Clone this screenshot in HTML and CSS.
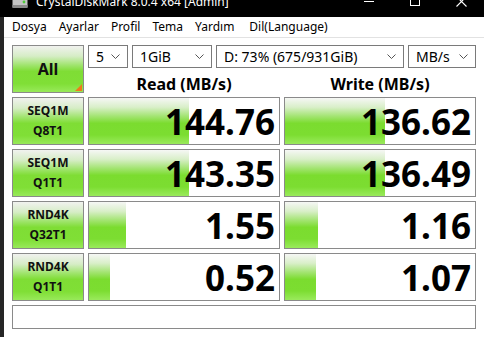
FILE: index.html
```html
<!DOCTYPE html>
<html lang="tr">
<head>
    <meta charset="UTF-8">
    <title>CrystalDiskMark 8.0.4 x64 [Admin]</title>
    <link rel="stylesheet" href="styles.css">
</head>
<body>
    <div class="titlebar">
        <div class="titlebar-row">
            <svg class="app-icon" viewBox="0 0 16 16">
                <rect x="0.5" y="4" width="15" height="11" rx="1.5" fill="#c4c4c4"/>
                <rect x="0.5" y="12" width="15" height="3" fill="#8a8a8a"/>
                <circle cx="12" cy="9" r="1.4" fill="#4ecb3a"/>
            </svg>
            <div class="title">CrystalDiskMark 8.0.4 x64 [Admin]</div>
            <div class="win-btn">
                <svg width="10" height="10" viewBox="0 0 10 10"><path d="M0 5.5h10" stroke="#fff" stroke-width="1"/></svg>
            </div>
            <div class="win-btn">
                <svg width="10" height="10" viewBox="0 0 10 10"><rect x="0.5" y="0.5" width="9" height="9" fill="none" stroke="#fff" stroke-width="1"/></svg>
            </div>
            <div class="win-btn">
                <svg width="11" height="11" viewBox="0 0 11 11"><path d="M0.5 0.5l10 10M10.5 0.5l-10 10" stroke="#fff" stroke-width="1.1"/></svg>
            </div>
        </div>
    </div>

    <div class="window">
        <div class="edge"></div>
        <div class="client">
            <div class="menu">
                <span>Dosya</span>
                <span>Ayarlar</span>
                <span>Profil</span>
                <span>Tema</span>
                <span>Yardım</span>
                <span class="menu-lang">Dil(Language)</span>
            </div>

            <div class="main">
                <div class="all-btn">All</div>
                <div class="controls">
                    <div class="selects">
                        <div class="select sel-count"><span>5</span><svg class="chev" viewBox="0 0 9 5"><polyline points="0.5,0.5 4.5,4.5 8.5,0.5"/></svg></div>
                        <div class="select sel-size"><span>1GiB</span><svg class="chev" viewBox="0 0 9 5"><polyline points="0.5,0.5 4.5,4.5 8.5,0.5"/></svg></div>
                        <div class="select sel-drive"><span>D: 73% (675/931GiB)</span><svg class="chev" viewBox="0 0 9 5"><polyline points="0.5,0.5 4.5,4.5 8.5,0.5"/></svg></div>
                        <div class="select sel-unit"><span>MB/s</span><svg class="chev" viewBox="0 0 9 5"><polyline points="0.5,0.5 4.5,4.5 8.5,0.5"/></svg></div>
                    </div>
                    <div class="heads">
                        <div class="head">Read (MB/s)</div>
                        <div class="head">Write (MB/s)</div>
                    </div>
                </div>

                <div class="label"><span>SEQ1M</span><span>Q8T1</span></div>
                <div class="cell" style="--fill: 100px">144.76</div>
                <div class="cell" style="--fill: 100px">136.62</div>

                <div class="label"><span>SEQ1M</span><span>Q1T1</span></div>
                <div class="cell" style="--fill: 100px">143.35</div>
                <div class="cell" style="--fill: 100px">136.49</div>

                <div class="label"><span>RND4K</span><span>Q32T1</span></div>
                <div class="cell" style="--fill: 37px">1.55</div>
                <div class="cell" style="--fill: 33px">1.16</div>

                <div class="label"><span>RND4K</span><span>Q1T1</span></div>
                <div class="cell" style="--fill: 21px">0.52</div>
                <div class="cell" style="--fill: 31px">1.07</div>

                <div class="status"></div>
            </div>
        </div>
    </div>
</body>
</html>
```

FILE: styles.css
```css
* {
    margin: 0;
    padding: 0;
    box-sizing: border-box;
}
body {
    width: 484px;
    height: 337px;
    overflow: hidden;
    background: #fff;
    color: #000;
    font-family: 'Noto Sans', 'Open Sans', sans-serif;
}

/* window chrome */
.titlebar {
    height: 17px;
    overflow: hidden;
    background: #000;
    color: #fff;
}
.titlebar-row {
    height: 32px;
    margin-top: -15px;
    display: flex;
    align-items: center;
}
.app-icon {
    width: 16px;
    height: 16px;
    margin-left: 12px;
}
.title {
    flex: 1;
    margin-left: 8px;
    font-size: 12px;
}
.win-btn {
    width: 46px;
    height: 32px;
    display: flex;
    align-items: center;
    justify-content: center;
}
.window {
    display: flex;
    height: 320px;
}
.edge {
    width: 4px;
    background: #262626;
}
.client {
    flex: 1;
}
.menu {
    display: flex;
    gap: 12px;
    height: 21px;
    padding-left: 8px;
    font-size: 12px;
    line-height: 20px;
    border-bottom: 1px solid #e2e2e2;
}
.menu-lang {
    margin-left: 3px;
}

/* benchmark grid */
.main {
    display: grid;
    grid-template-columns: 72px 192px 192px;
    grid-auto-rows: 48px;
    gap: 4px;
    padding: 7px 8px 0;
}
.all-btn,
.label {
    border: 1px solid #8a8a8a;
    background: linear-gradient(to bottom, #f1f2ef 0%, #d6edc6 22%, #9fe46c 42%, #7fdd35 55%, #80df36 82%, #98e95a 100%);
    font-weight: 700;
    color: #111;
}
.all-btn {
    position: relative;
    display: flex;
    align-items: center;
    justify-content: center;
    font-size: 16px;
}
.all-btn::after {
    content: '';
    position: absolute;
    right: 1px;
    bottom: 1px;
    border-style: solid;
    border-width: 0 0 7px 7px;
    border-color: transparent transparent #f07a1a transparent;
}
.controls {
    grid-column: span 2;
    display: flex;
    flex-direction: column;
}
.selects {
    display: flex;
    gap: 4px;
    height: 23px;
}
.select {
    display: flex;
    align-items: center;
    justify-content: space-between;
    padding: 0 7px;
    border: 1px solid #7a7a7a;
    font-size: 14px;
    line-height: 21px;
}
.sel-count { width: 40px; }
.sel-size { width: 80px; }
.sel-drive { width: 188px; }
.sel-unit { width: 68px; }
.chev {
    width: 9px;
    height: 5px;
    fill: none;
    stroke: #555;
    stroke-width: 1;
}
.heads {
    flex: 1;
    display: flex;
    gap: 4px;
    align-items: flex-end;
}
.head {
    width: 192px;
    text-align: center;
    font-size: 16px;
    font-weight: 700;
    line-height: 18px;
}
.label {
    display: flex;
    flex-direction: column;
    align-items: center;
    justify-content: center;
    font-size: 12px;
    line-height: 20px;
}
.cell {
    display: flex;
    align-items: center;
    justify-content: flex-end;
    padding-right: 4px;
    border: 1px solid #8a8a8a;
    background-color: #fff;
    background-image: linear-gradient(to bottom, #f6f7f5 0%, #d9efc9 20%, #a2e470 40%, #7bdc2f 55%, #7cdd31 80%, #9aea5c 100%);
    background-size: var(--fill) 100%;
    background-repeat: no-repeat;
    font-size: 35px;
    font-weight: 700;
    line-height: 1;
}
.status {
    grid-column: 1 / -1;
    height: 24px;
    border: 1px solid #8a8a8a;
}
```
